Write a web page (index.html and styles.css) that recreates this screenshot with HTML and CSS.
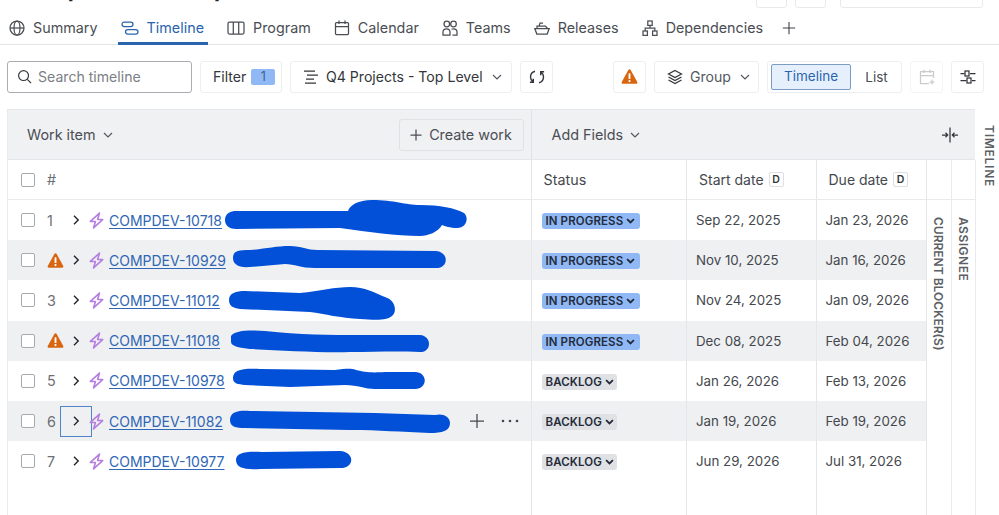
FILE: index.html
```html
<!DOCTYPE html>
<html lang="en">
<head>
<meta charset="utf-8">
<title>Timeline</title>
<link rel="stylesheet" href="styles.css">
</head>
<body>
<svg class="defs" width="0" height="0" aria-hidden="true">
  <symbol id="warn" viewBox="0 0 16 16"><path d="M8 1.2c.5 0 .9.3 1.1.7l6.2 11.2c.4.8-.1 1.7-1 1.7H1.700c-.9 0-1.400-.9-1-1.700L6.900 1.900C7.100 1.500 7.500 1.200 8 1.200z" fill="#d9660f"/><rect x="7.100" y="5" width="1.800" height="5.400" rx=".6" fill="#fff"/><circle cx="8" cy="12.300" r="1.050" fill="#fff"/></symbol>
  <symbol id="bolt" viewBox="0 0 16 16"><path d="M10.800 1 2.200 8.900H7L5.200 15l8.600-7.900H9z" fill="none" stroke="#b47fe0" stroke-width="1.500" stroke-linejoin="round"/></symbol>
  <symbol id="chev" viewBox="0 0 10 12"><path d="M3 1.800 7.200 6 3 10.200" fill="none" stroke="#22252a" stroke-width="1.400"/></symbol>
  <symbol id="down" viewBox="0 0 10 6"><path d="M1 1l4 4 4-4" fill="none" stroke="currentColor" stroke-width="1.200"/></symbol>
  <symbol id="pilldown" viewBox="0 0 10 6"><path d="M1.200 1 5 4.600 8.800 1" fill="none" stroke="currentColor" stroke-width="2"/></symbol>
</svg>

<div class="titlebar">
  <h1 class="title">Compdev Roadmap</h1>
  <div class="title-actions"><span class="ta ta-small"></span><span class="ta ta-small"></span><span class="ta ta-wide"></span></div>
</div>

<nav class="tabs">
  <a class="tab"><svg class="ic" viewBox="0 0 16 16"><circle cx="8" cy="8" r="7"/><ellipse cx="8" cy="8" rx="3" ry="7"/><path d="M1 8h14"/></svg>Summary</a>
  <a class="tab tab-active"><svg class="ic ic-wide" viewBox="0 0 18 16"><rect x="1" y="2" width="11" height="4.500" rx="2.200"/><rect x="4.500" y="9.500" width="12.500" height="4.500" rx="2.200"/></svg>Timeline</a>
  <a class="tab"><svg class="ic ic-wide" viewBox="0 0 18 16"><rect x="1" y="2" width="16" height="12" rx="1.500"/><path d="M6.300 2v12M11.700 2v12"/></svg>Program</a>
  <a class="tab"><svg class="ic" viewBox="0 0 16 16"><rect x="1.500" y="2.500" width="13" height="12" rx="1"/><path d="M1.500 6.500h13M5 .5v3.500M11 .5v3.500"/></svg>Calendar</a>
  <a class="tab"><svg class="ic" viewBox="0 0 16 16"><circle cx="4.800" cy="4" r="2.800"/><circle cx="11.500" cy="4" r="2.800"/><path d="M1 15v-3c0-2 1.500-3.200 3.500-3.200S8 10 8 12v3zM9.500 9.200c.6-.3 1.300-.4 2-.4 2 0 3.500 1.200 3.500 3.200V15h-4.500"/></svg>Teams</a>
  <a class="tab"><svg class="ic" viewBox="0 0 16 16"><path d="M.8 8.500h14.400L13.200 14H2.800zM3 8.500V6.200h8.500l2 2.300M5 6.200 6 3h3"/></svg>Releases</a>
  <a class="tab"><svg class="ic" viewBox="0 0 16 16"><rect x="5.800" y="1" width="4.400" height="4.400"/><rect x="1" y="11" width="4.400" height="4.400"/><rect x="10.600" y="11" width="4.400" height="4.400"/><path d="M8 5.400V8M3.200 11V8h9.600v3"/></svg>Dependencies</a>
  <svg class="ic tab-plus" viewBox="0 0 16 16"><path d="M8 1v14M1 8h14"/></svg>
</nav>

<div class="toolbar">
  <label class="search"><svg class="ic ic-search" viewBox="0 0 16 16"><circle cx="7" cy="7" r="5.300"/><path d="m11 11 4 4"/></svg><span>Search timeline</span></label>
  <button class="btn btn-filter">Filter <span class="count">1</span></button>
  <button class="btn btn-q4"><svg class="ic" viewBox="0 0 16 16"><path d="M1 2h11M4 6h11M3 10h8M2 14h11"/></svg>Q4 Projects - Top Level<svg class="caret"><use href="#down"/></svg></button>
  <button class="btn btn-icon"><svg class="ic ic-refresh" viewBox="0 0 16 16"><path d="M6 2.200C3.300 2.900 1.500 5.200 1.500 8c0 2 1 3.800 2.600 4.900M10 13.800c2.700-.7 4.500-3 4.500-5.800 0-2-1-3.800-2.600-4.900M4.300 9.800v3.400H.9M11.700 6.200V2.800h3.400"/></svg></button>
  <span class="spacer"></span>
  <button class="btn btn-icon"><svg class="warn-lg"><use href="#warn"/></svg></button>
  <button class="btn btn-group"><svg class="ic" viewBox="0 0 16 16"><path d="M8 1.500 14.500 5 8 8.500 1.500 5zM1.500 8 8 11.500 14.500 8M1.500 11 8 14.500 14.500 11"/></svg>Group<svg class="caret"><use href="#down"/></svg></button>
  <div class="toggle"><span class="toggle-on">Timeline</span><span class="toggle-off">List</span></div>
  <button class="btn btn-icon btn-disabled"><svg class="ic" viewBox="0 0 16 16"><path d="M10 14.500H1.500v-12h13V9M1.500 6.500h13M5 .5V4M11 .5V4M13 10.500v5M10.500 13h5"/></svg></button>
  <button class="btn btn-icon"><svg class="ic" viewBox="0 0 16 16"><path d="M.5 4.500h4M10 4.500h5.500M.5 11.500h6M12 11.500h3.500"/><rect x="5" y="2" width="4" height="5"/><rect x="7" y="9" width="4" height="5"/></svg></button>
</div>

<div class="workspace">
  <section class="table">
    <div class="topbar">
      <div class="topbar-work"><span class="topbar-label">Work item<svg class="caret"><use href="#down"/></svg></span><button class="create"><svg class="ic ic-plus" viewBox="0 0 12 12"><path d="M6 .5v11M.5 6h11"/></svg>Create work</button></div>
      <div class="topbar-fields"><span class="topbar-label">Add Fields<svg class="caret"><use href="#down"/></svg></span><svg class="ic ic-collapse" viewBox="0 0 18 16"><path d="M9 .5v15M1 8h5.500M4.500 5.800 6.700 8l-2.200 2.200M17 8h-5.500M13.500 5.800 11.300 8l2.200 2.200"/></svg></div>
    </div>
    <div class="tbody">
      <div class="grid">
        <div class="row row-head">
          <div class="c c-work"><span class="check"></span><span class="num">#</span></div>
          <div class="c c-status"><span class="status-head">Status</span></div>
          <div class="c c-date c-date-head">Start date <span class="key">D</span></div>
          <div class="c c-due c-date-head">Due date <span class="key">D</span></div>
        </div>

        <div class="row">
          <div class="c c-work"><span class="check"></span><span class="num">1</span><span class="exp"><svg class="chev"><use href="#chev"/></svg></span><svg class="bolt"><use href="#bolt"/></svg><a class="key-link">COMPDEV-10718</a></div>
          <div class="c c-status"><span class="pill pill-blue">IN PROGRESS<svg class="pd"><use href="#pilldown"/></svg></span></div>
          <div class="c c-date">Sep 22, 2025</div><div class="c c-due">Jan 23, 2026</div>
        </div>
        <div class="row row-alt">
          <div class="c c-work"><span class="check"></span><span class="num"><svg class="warn"><use href="#warn"/></svg></span><span class="exp"><svg class="chev"><use href="#chev"/></svg></span><svg class="bolt"><use href="#bolt"/></svg><a class="key-link">COMPDEV-10929</a></div>
          <div class="c c-status"><span class="pill pill-blue">IN PROGRESS<svg class="pd"><use href="#pilldown"/></svg></span></div>
          <div class="c c-date">Nov 10, 2025</div><div class="c c-due">Jan 16, 2026</div>
        </div>
        <div class="row">
          <div class="c c-work"><span class="check"></span><span class="num">3</span><span class="exp"><svg class="chev"><use href="#chev"/></svg></span><svg class="bolt"><use href="#bolt"/></svg><a class="key-link">COMPDEV-11012</a></div>
          <div class="c c-status"><span class="pill pill-blue">IN PROGRESS<svg class="pd"><use href="#pilldown"/></svg></span></div>
          <div class="c c-date">Nov 24, 2025</div><div class="c c-due">Jan 09, 2026</div>
        </div>
        <div class="row row-alt">
          <div class="c c-work"><span class="check"></span><span class="num"><svg class="warn"><use href="#warn"/></svg></span><span class="exp"><svg class="chev"><use href="#chev"/></svg></span><svg class="bolt"><use href="#bolt"/></svg><a class="key-link">COMPDEV-11018</a></div>
          <div class="c c-status"><span class="pill pill-blue">IN PROGRESS<svg class="pd"><use href="#pilldown"/></svg></span></div>
          <div class="c c-date">Dec 08, 2025</div><div class="c c-due">Feb 04, 2026</div>
        </div>
        <div class="row">
          <div class="c c-work"><span class="check"></span><span class="num">5</span><span class="exp"><svg class="chev"><use href="#chev"/></svg></span><svg class="bolt"><use href="#bolt"/></svg><a class="key-link">COMPDEV-10978</a></div>
          <div class="c c-status"><span class="pill pill-gray">BACKLOG<svg class="pd"><use href="#pilldown"/></svg></span></div>
          <div class="c c-date">Jan 26, 2026</div><div class="c c-due">Feb 13, 2026</div>
        </div>
        <div class="row row-alt">
          <div class="c c-work"><span class="check"></span><span class="num">6</span><span class="exp exp-focus"><svg class="chev"><use href="#chev"/></svg></span><svg class="bolt"><use href="#bolt"/></svg><a class="key-link">COMPDEV-11082</a>
            <span class="row-actions"><svg class="ic ic-add" viewBox="0 0 14 14"><path d="M7 0v14M0 7h14"/></svg><svg class="ic-dots" viewBox="0 0 18 4"><circle cx="2" cy="2" r="1.300"/><circle cx="9" cy="2" r="1.300"/><circle cx="16" cy="2" r="1.300"/></svg></span></div>
          <div class="c c-status"><span class="pill pill-gray">BACKLOG<svg class="pd"><use href="#pilldown"/></svg></span></div>
          <div class="c c-date">Jan 19, 2026</div><div class="c c-due">Feb 19, 2026</div>
        </div>
        <div class="row">
          <div class="c c-work"><span class="check"></span><span class="num">7</span><span class="exp"><svg class="chev"><use href="#chev"/></svg></span><svg class="bolt"><use href="#bolt"/></svg><a class="key-link">COMPDEV-10977</a></div>
          <div class="c c-status"><span class="pill pill-gray">BACKLOG<svg class="pd"><use href="#pilldown"/></svg></span></div>
          <div class="c c-date">Jun 29, 2026</div><div class="c c-due">Jul 31, 2026</div>
        </div>
        <div class="row row-fill">
          <div class="c c-work"></div><div class="c c-status"></div><div class="c c-date"></div><div class="c c-due"></div>
        </div>
      </div>
      <div class="vcol"><div class="vcol-head"></div><div class="vcol-text">CURRENT BLOCKER(S)</div></div>
      <div class="vcol"><div class="vcol-head"></div><div class="vcol-text vcol-assignee">ASSIGNEE</div></div>
    </div>
  </section>
  <aside class="strip"><span class="strip-text">TIMELINE</span></aside>
</div>

<svg class="scribbles" viewBox="0 0 999 515" aria-hidden="true">
  <path d="M225 220C225 213 231 211 236 211L348 211C350 205 358 200 372 200C395 200 405 205 420 205C440 205 455 208 464 213C469 217 467 228 457 228C450 228 445 226 442 225C438 232 428 236 420 236C395 236 370 232 340 228L236 229C230 229 225 226 225 220Z"/>
  <path d="M233 258C233 251 238 250 250 250C265 249 275 246 290 246C302 246 306 250 318 250L436 251C449 252 449 268 436 268L315 268C300 268 295 264 285 264L250 267C238 268 233 264 233 258Z"/>
  <path d="M229 300C229 293 236 291 245 291L300 293C320 291 335 287 350 287C365 287 375 293 385 297C395 300 397 310 393 315C388 321 375 320 360 319C340 318 325 314 310 312L240 309C233 308 229 306 229 300Z"/>
  <path d="M231 336C235 330 250 330 265 331C300 335 330 335 360 335L420 335C432 336 432 352 420 352C395 351 375 352 350 352C320 353 280 350 250 349C240 348 231 346 231 342Z"/>
  <path d="M233 378C233 370 242 368 260 369L335 370C345 369 350 368 356 370C365 372 370 373 385 372L415 372C428 372 428 389 415 389L375 389C365 389 358 385 345 385L290 387L245 385C238 384 233 384 233 378Z"/>
  <path d="M230 420C230 412 238 410 250 411L375 413L435 415C442 413 450 416 450 423C450 431 442 433 430 433C400 432 380 430 350 430L245 428C236 428 230 427 230 420Z"/>
  <path d="M236 460C236 453 245 451 262 452L340 451C355 452 355 468 340 468L260 469C245 470 236 468 236 460Z"/>
</svg>
</body>
</html>
```

FILE: styles.css
```css
* { box-sizing: border-box; }
html, body { margin: 0; height: 100%; }
body {
  display: flex;
  flex-direction: column;
  height: 515px;
  overflow: hidden;
  position: relative;
  background: #fff;
  color: #44474d;
  font-family: Inter, "Liberation Sans", sans-serif;
  font-size: 14.350px;
}
.defs { position: absolute; }
button { font: inherit; color: inherit; background: #fff; }

.ic { fill: none; stroke: currentColor; stroke-width: 1.250; width: 16px; height: 16px; flex: none; }
.ic-wide { width: 18px; }
.caret { width: 10px; height: 6px; flex: none; color: #55585e; }

/* clipped page title */
.titlebar { height: 8px; flex: none; overflow: hidden; display: flex; justify-content: space-between; padding: 0 16px 0 18px; }
.title { margin: -26px 0 0; font-size: 22px; line-height: 30px; font-weight: 700; color: #22252a; white-space: nowrap; }
.title-actions { display: flex; gap: 8px; margin-top: -10px; }
.ta { display: block; height: 18px; border: 1px solid #e8e9eb; border-radius: 3px; }
.ta-small { width: 31px; }
.ta-wide { width: 143px; margin-left: 6px; }

/* tabs */
.tabs { height: 37px; flex: none; display: flex; align-items: center; gap: 23px; padding: 3px 0 0 9px; border-bottom: 1px solid #e4e6e9; }
.tab { position: relative; display: flex; align-items: center; gap: 8px; height: 100%; color: #4a4d53; }
.tab-active { color: #2a64ae; }
.tab-active::after { content: ""; position: absolute; left: -3px; right: -4px; bottom: -1px; height: 3px; background: #2a64ae; }
.tab-plus { width: 14px; height: 14px; margin-left: -4px; color: #3d4045; }

/* toolbar */
.toolbar { height: 64px; flex: none; display: flex; align-items: center; gap: 8px; padding: 0 15px 0 7px; font-size: 14.100px; }
.toolbar .ic { color: #33363b; }
.spacer { flex: 1; }
.search { width: 185px; height: 32px; display: flex; align-items: center; gap: 6px; padding: 0 9px 1px; border: 1px solid #a9acb1; border-radius: 3px; color: #7c7f85; }
.ic-search { width: 15px; height: 15px; }
.btn { height: 32px; display: flex; align-items: center; border: 1px solid #eceef0; border-radius: 3px; padding: 0 0 1px; color: #33363b; }
.btn-filter { width: 82px; padding-left: 12px; gap: 5px; }
.count { width: 24px; height: 16px; line-height: 16px; text-align: center; background: #8fb8f5; border-radius: 2px; font-size: 12.500px; color: #3f5f8e; }
.btn-q4 { width: 222px; padding-left: 12px; gap: 7px; }
.btn-q4 .caret { margin-left: 2px; }
.btn-icon { width: 33px; justify-content: center; }
.ic-refresh { stroke-width: 1.400; }
.warn-lg { width: 17px; height: 17px; }
.btn-group { width: 105px; padding-left: 12px; gap: 7px; color: #55585e; }
.btn-group .caret { margin-left: 2px; }
.toggle { width: 135px; height: 32px; display: flex; align-items: center; padding: 3px; border: 1px solid #eceef0; border-radius: 3px; font-size: 13.500px; }
.toggle-on { width: 80px; height: 26px; line-height: 23px; text-align: center; background: #e6f0fc; border: 1px solid #7d9cc4; border-radius: 2px; color: #2a64ae; }
.toggle-off { flex: 1; text-align: center; color: #4a4d53; padding: 0 0 1px 4px; }
.btn-disabled { border-color: #f3f4f5; }
.toolbar .btn-disabled .ic { color: #c9cbce; }

/* table */
.workspace { flex: 1; min-height: 0; display: flex; padding-left: 7px; }
.table { width: 968px; flex: none; display: flex; flex-direction: column; border-left: 1px solid #e9eaec; border-top: 1px solid #e4e6e9; }
.topbar { height: 50px; flex: none; display: flex; background: #f0f1f3; border-bottom: 1px solid #e4e6e9; }
.topbar-work { width: 523.500px; flex: none; display: flex; align-items: center; justify-content: space-between; padding: 0 7px 0 19px; border-right: 1px solid #dfe1e4; }
.topbar-fields { flex: 1; display: flex; align-items: center; justify-content: space-between; padding: 0 16px 0 20px; }
.topbar-label { display: flex; align-items: center; gap: 7px; color: #4a4d53; }
.create { height: 32px; width: 125px; display: flex; align-items: center; justify-content: center; gap: 7px; background: #f0f1f3; border: 1px solid #dfe1e4; border-radius: 3px; color: #4a4d53; padding: 0; }
.ic-plus { width: 12px; height: 12px; }
.ic-collapse { width: 18px; height: 16px; color: #33363b; }

.tbody { flex: 1; min-height: 0; display: flex; }
.grid { width: 919px; flex: none; display: flex; flex-direction: column; }
.row { height: 40.200px; flex: none; display: grid; grid-template-columns: 523.500px 155px 130px 110.500px; }
.row-head { height: 40px; border-bottom: 1px solid #e9eaec; }
.row-alt { background: #eff0f2; }
.row-fill { flex: 1; }
.c { display: flex; align-items: center; border-right: 1px solid #e4e6e9; min-width: 0; }
.c-work { padding-left: 13px; }
.c-status { padding-left: 10px; }
.c-date { padding-left: 9.500px; font-size: 13.300px; }
.c-due { padding-left: 9px; border-right: 1px solid #e4e6e9; font-size: 13.300px; }
.c-date-head { padding-left: 12.500px; gap: 5px; font-size: 14px; }
.c-due.c-date-head { padding-left: 12px; font-size: 14px; }
.status-head { padding-left: 2px; }
.check { width: 14px; height: 14px; flex: none; border: 1.500px solid #a6a9ae; border-radius: 2px; background: #fff; }
.num { width: 26px; margin-left: 12px; flex: none; display: flex; align-items: center; color: #6c6f75; }
.warn { width: 17px; height: 17px; }
.exp { width: 32px; height: 31px; margin-left: -13px; flex: none; display: flex; align-items: center; justify-content: center; border: 1.500px solid transparent; }
.exp-focus { border-color: #4f84c8; }
.chev { width: 10px; height: 12px; }
.bolt { width: 17px; height: 17px; margin-left: -4px; flex: none; }
.key-link { margin-left: 4px; font-size: 14px; color: #2f66b5; text-decoration: underline; text-underline-offset: 2px; white-space: nowrap; }
.row-actions { margin-left: auto; margin-right: 12px; display: flex; align-items: center; gap: 17px; }
.ic-add { width: 14px; height: 14px; color: #44474d; }
.ic-dots { width: 18px; height: 4px; fill: #44474d; }
.key { width: 15px; height: 15px; line-height: 13px; text-align: center; font-size: 10.500px; font-weight: 600; border: 1px solid #dcdee1; border-radius: 2px; color: #33363b; background: #fff; }
.pill { display: inline-flex; align-items: center; gap: 3px; height: 16px; padding: 0 4px; margin-top: 2px; border-radius: 3px; font-size: 11.500px; font-weight: 600; letter-spacing: .1px; color: #232b3a; white-space: nowrap; }
.pill-blue { background: #8fb8f5; width: 98px; }
.pill-gray { background: #dfe1e4; width: 75px; }
.pd { width: 9px; height: 6px; flex: none; }

.vcol { width: 24.500px; flex: none; display: flex; flex-direction: column; border-right: 1px solid #e9eaec; }
.vcol-head { height: 40px; flex: none; border-bottom: 1px solid #e9eaec; }
.vcol-text { writing-mode: vertical-rl; padding-top: 17px; margin: 0 auto; font-size: 12px; font-weight: 600; color: #5c5f65; white-space: nowrap; }
.vcol-assignee { letter-spacing: .5px; }

.strip { flex: 1; display: flex; justify-content: center; padding: 16px 0 0 5px; }
.strip-text { writing-mode: vertical-rl; font-size: 12px; font-weight: 600; letter-spacing: .75px; color: #5c5f65; }

/* hand-drawn redaction marks lie over the table */
.scribbles { position: absolute; left: 0; top: 0; width: 999px; height: 515px; fill: #0350d8; pointer-events: none; }
```
